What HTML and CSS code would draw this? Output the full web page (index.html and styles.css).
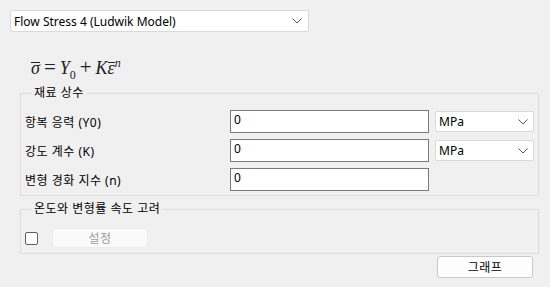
FILE: index.html
```html
<!DOCTYPE html>
<html>
<head lang="ko">
    <meta charset="UTF-8">
    <title>Flow Stress</title>
    <link rel="stylesheet" href="styles.css">
</head>
<body>
    <div id="app">
        <!-- 모델 선택 -->
        <div class="combo model">
            <span>Flow Stress 4 (Ludwik Model)</span>
            <svg class="chev" width="10" height="6" viewBox="0 0 10 6"><path d="M0.5 0.5 L5 5 L9.5 0.5" fill="none" stroke="#555" stroke-width="1"/></svg>
        </div>

        <!-- 수식 -->
        <div class="formula"><span class="bar">σ</span><span class="op">=</span><i>Y</i><sub>0</sub><span class="op">+</span><i>K</i><span class="bar">ε</span><sup>n</sup></div>

        <!-- 재료 상수 -->
        <fieldset class="group consts">
            <legend>재료 상수</legend>
            <div class="row">
                <label>항복 응력 (Y0)</label>
                <div class="edit">0</div>
                <div class="combo unit"><span>MPa</span><svg class="chev" width="10" height="6" viewBox="0 0 10 6"><path d="M0.5 0.5 L5 5 L9.5 0.5" fill="none" stroke="#555" stroke-width="1"/></svg></div>
            </div>
            <div class="row">
                <label>강도 계수 (K)</label>
                <div class="edit">0</div>
                <div class="combo unit"><span>MPa</span><svg class="chev" width="10" height="6" viewBox="0 0 10 6"><path d="M0.5 0.5 L5 5 L9.5 0.5" fill="none" stroke="#555" stroke-width="1"/></svg></div>
            </div>
            <div class="row">
                <label>변형 경화 지수 (n)</label>
                <div class="edit">0</div>
            </div>
        </fieldset>

        <!-- 온도/속도 -->
        <fieldset class="group rate">
            <legend>온도와 변형률 속도 고려</legend>
            <div class="rate-row">
                <span class="check"></span>
                <div class="btn disabled">설정</div>
            </div>
        </fieldset>

        <div class="bottom">
            <div class="btn graph">그래프</div>
        </div>
    </div>
</body>
</html>
```

FILE: styles.css
```css
*{
    margin: 0px;
    padding: 0px;
    box-sizing: border-box;
}

body{
    background: #f0f0f0;
    font-family: "Noto Sans", "Noto Sans CJK KR", sans-serif;
    font-size: 12px;
    color: #000;
}

#app{
    padding: 10px 11px 0 10px;
}

.combo{
    display: flex;
    align-items: center;
    justify-content: space-between;
    background: #fff;
    border: 1px solid #d9d9d9;
    border-radius: 2px;
}

.combo.model{
    width: 299px;
    height: 22px;
    padding: 0 6px 0 3px;
}

.combo.unit{
    width: 99px;
    height: 21px;
    padding: 0 5px 0 3px;
}

.formula{
    margin: 19px 0 0 21px;
    height: 24px;
    font-family: "Liberation Serif", serif;
    font-size: 18px;
    line-height: 24px;
    color: #222;
}

.formula .op{
    margin: 0 4px;
    font-size: 21px;
    line-height: 10px;
}

.formula sub{
    font-size: 12px;
}

.formula sup{
    font-style: italic;
    font-size: 12px;
}

.bar{
    display: inline-block;
    font-style: italic;
    border-top: 1px solid #222;
    line-height: 10px;
}

.group{
    margin-left: 10px;
    width: 519px;
    border: 1px solid #dcdcdc;
}

.group legend{
    margin-left: 7px;
    padding: 0 2px;
    font-size: 12px;
    line-height: 16px;
    letter-spacing: 0.5px;
}

.consts{
    margin-top: 10px;
    height: 111px;
    padding: 6px 0 0 4px;
}

.row{
    display: flex;
    align-items: center;
    height: 29px;
}

.row label{
    width: 205px;
    letter-spacing: 0.5px;
}

.edit{
    width: 199px;
    height: 23px;
    background: #fff;
    border: 1px solid #7a7a7a;
    padding: 1px 0 0 3px;
    line-height: 16px;
    margin-right: 6px;
}

.rate{
    margin-top: 5px;
    height: 53px;
    padding: 11px 0 0 4px;
}

.rate-row{
    display: flex;
    align-items: center;
}

.check{
    width: 13px;
    height: 13px;
    border: 1px solid #5f5f5f;
    border-radius: 2px;
    background: #fff;
    margin-right: 14px;
}

.btn{
    display: flex;
    align-items: center;
    justify-content: center;
    border-radius: 3px;
    letter-spacing: 0.5px;
}

.btn.disabled{
    width: 96px;
    height: 20px;
    background: #fafafa;
    border: 1px solid #ececec;
    color: #9d9d9d;
}

.bottom{
    display: flex;
    justify-content: flex-end;
    width: 523px;
    margin-top: 2px;
}

.btn.graph{
    width: 96px;
    height: 22px;
    background: #fdfdfd;
    border: 1px solid #c8c8c8;
}
```
